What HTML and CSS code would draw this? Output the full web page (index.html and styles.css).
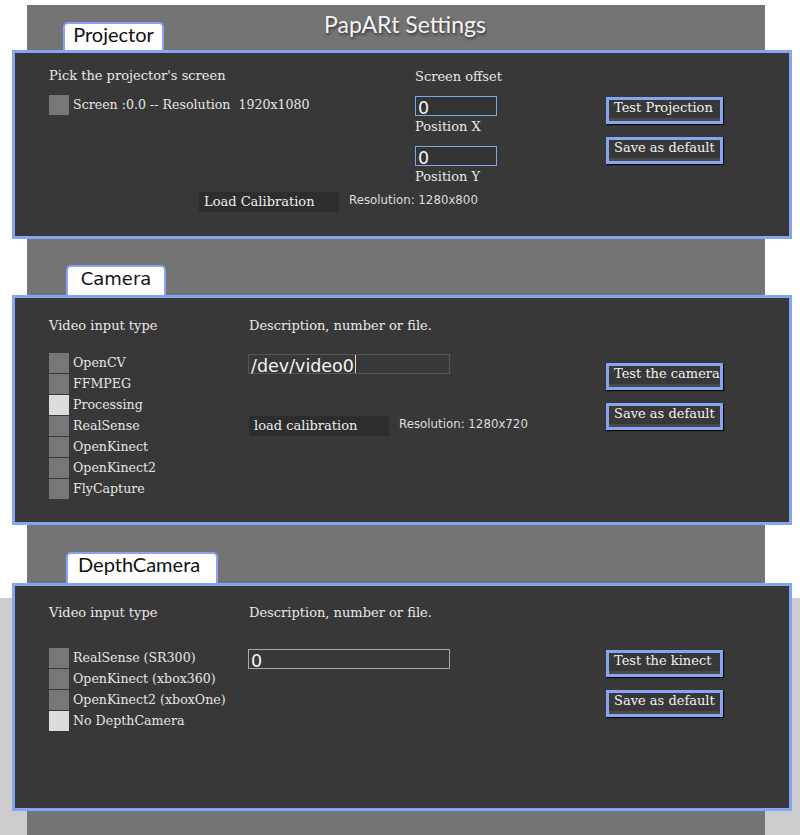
FILE: index.html
```html
<!DOCTYPE html>
<html>
<head>
<meta charset="utf-8">
<title>PapARt Settings</title>
<link rel="stylesheet" href="styles.css">
</head>
<body>
<div class="canvas">
  <h1 class="title">PapARt Settings</h1>

  <section class="group">
    <div class="tab tab-proj">Projector</div>
    <div class="panel panel-proj">
      <div class="cols">
        <div class="col c1-proj">
          <div class="label">Pick the projector's screen</div>
          <div class="opts opts-proj">
            <div class="opt"><span class="box"></span><span class="opt-text">Screen :0.0 -- Resolution&nbsp; 1920x1080</span></div>
          </div>
        </div>
        <div class="col c2-proj">
          <div class="label offset">Screen offset</div>
          <div class="field field-blue field-first">0</div>
          <div class="label sub">Position X</div>
          <div class="field field-blue field-second">0</div>
          <div class="label sub">Position Y</div>
        </div>
        <div class="col c3">
          <div class="btn btn-first-proj">Test Projection</div>
          <div class="btn btn-second">Save as default</div>
        </div>
      </div>
      <div class="loadrow loadrow-proj">
        <div class="loadbtn">Load Calibration</div>
        <div class="res">Resolution: 1280x800</div>
      </div>
    </div>
  </section>

  <section class="group group-next">
    <div class="tab tab-cam">Camera</div>
    <div class="panel panel-cam">
      <div class="cols">
        <div class="col c1">
          <div class="label">Video input type</div>
          <div class="opts opts-cam">
            <div class="opt"><span class="box"></span><span class="opt-text">OpenCV</span></div>
            <div class="opt"><span class="box"></span><span class="opt-text">FFMPEG</span></div>
            <div class="opt"><span class="box on"></span><span class="opt-text">Processing</span></div>
            <div class="opt"><span class="box"></span><span class="opt-text">RealSense</span></div>
            <div class="opt"><span class="box"></span><span class="opt-text">OpenKinect</span></div>
            <div class="opt"><span class="box"></span><span class="opt-text">OpenKinect2</span></div>
            <div class="opt"><span class="box"></span><span class="opt-text">FlyCapture</span></div>
          </div>
        </div>
        <div class="col c2">
          <div class="label desc">Description, number or file.</div>
          <div class="field field-wide field-dark field-cam"><span class="cursor">/dev/video0</span></div>
          <div class="loadrow loadrow-cam">
            <div class="loadbtn">load calibration</div>
            <div class="res">Resolution: 1280x720</div>
          </div>
        </div>
        <div class="col c3">
          <div class="btn btn-first">Test the camera</div>
          <div class="btn btn-second">Save as default</div>
        </div>
      </div>
    </div>
  </section>

  <section class="group group-next2">
    <div class="tab tab-depth">DepthCamera</div>
    <div class="panel panel-depth">
      <div class="cols">
        <div class="col c1">
          <div class="label">Video input type</div>
          <div class="opts opts-depth">
            <div class="opt"><span class="box"></span><span class="opt-text">RealSense (SR300)</span></div>
            <div class="opt"><span class="box"></span><span class="opt-text">OpenKinect (xbox360)</span></div>
            <div class="opt"><span class="box"></span><span class="opt-text">OpenKinect2 (xboxOne)</span></div>
            <div class="opt"><span class="box on"></span><span class="opt-text">No DepthCamera</span></div>
          </div>
        </div>
        <div class="col c2">
          <div class="label desc">Description, number or file.</div>
          <div class="field field-wide field-light field-depth">0</div>
        </div>
        <div class="col c3">
          <div class="btn btn-first">Test the kinect</div>
          <div class="btn btn-second">Save as default</div>
        </div>
      </div>
    </div>
  </section>
</div>
</body>
</html>
```

FILE: styles.css
```css
html, body {
  margin: 0;
  padding: 0;
}

body {
  height: 835px;
  overflow: hidden;
  background: linear-gradient(to bottom, #ffffff 0, #ffffff 598px, #cccccc 598px, #cccccc 100%);
  font-family: "DejaVu Serif", serif;
  font-size: 13px;
}

.canvas {
  position: relative;
  box-sizing: border-box;
  margin: 5px 0 0 27px;
  width: 738px;
  height: 830px;
  padding-top: 17px;
  background: #747474;
}

.title {
  position: absolute;
  top: 5px;
  left: 0;
  right: 0;
  margin: 0;
  padding-left: 18px;
  text-align: center;
  font-family: Lato, "Open Sans", sans-serif;
  font-weight: 400;
  font-size: 23px;
  line-height: 28px;
  color: #f4f4f4;
  text-shadow: 1px 2px 3px rgba(0, 0, 0, 0.55);
}

.group {
  margin-left: -15px;
  margin-right: -27px;
}

.group-next {
  margin-top: 26px;
}

.group-next2 {
  margin-top: 27px;
}

.tab {
  box-sizing: border-box;
  border: 2px solid #86a5f0;
  border-bottom: 0;
  border-radius: 5px 5px 0 0;
  background: #ffffff;
  color: #111111;
  text-align: center;
  font-family: Lato, "Open Sans", sans-serif;
  font-size: 20px;
  line-height: 20px;
}

.tab-proj {
  margin-left: 51px;
  width: 101px;
  height: 28px;
}

.tab-cam {
  margin-left: 54px;
  width: 100px;
  height: 30px;
  padding-top: 1px;
  font-family: "DejaVu Sans", sans-serif;
  font-size: 18px;
  line-height: 22px;
}

.tab-depth {
  margin-left: 54px;
  width: 152px;
  height: 31px;
  padding-left: 10px;
  text-align: left;
}

.panel {
  box-sizing: border-box;
  border: 3px solid #86a5f0;
  background: #383838;
  color: #e8e8e8;
  padding-left: 34px;
}

.panel-proj {
  height: 189px;
  padding-top: 15px;
}

.panel-cam {
  height: 230px;
  padding-top: 20px;
}

.panel-depth {
  height: 228px;
  padding-top: 19px;
}

.cols {
  display: flex;
  align-items: flex-start;
}

.col {
  display: flex;
  flex-direction: column;
  align-items: flex-start;
}

.c1-proj { width: 366px; }
.c2-proj { width: 191px; }
.c1 { width: 199px; }
.c2 { width: 358px; }

.label {
  line-height: 16px;
  white-space: nowrap;
}

.offset {
  margin-top: 1px;
  margin-bottom: -1px;
}

.desc {
  padding-left: 1px;
}

.sub {
  margin-top: 3px;
}

.opts {
  display: flex;
  flex-direction: column;
  gap: 1px;
}

.opts-proj { margin-top: 11px; }
.opts-cam { margin-top: 19px; }
.opts-depth { margin-top: 27px; }

.opt {
  display: flex;
  align-items: center;
  height: 20px;
}

.box {
  width: 20px;
  height: 20px;
  background: #777777;
  flex: none;
}

.box.on {
  background: #dcdcdc;
}

.opt-text {
  margin-left: 4px;
  font-size: 12.6px;
  line-height: 20px;
  white-space: nowrap;
  color: #e6e6e6;
}

.field {
  box-sizing: border-box;
  height: 20px;
  padding-left: 2px;
  font-family: "DejaVu Sans", sans-serif;
  font-size: 17.5px;
  line-height: 22px;
  color: #f4f4f4;
  background: #333333;
  white-space: nowrap;
}

.field-blue {
  width: 82px;
  border: 1px solid #86a5f0;
}

.field-first { margin-top: 12px; }
.field-second { margin-top: 11px; }

.field-wide {
  width: 202px;
}

.field-dark {
  border: 1px solid #555555;
  background: #383838;
}

.field-light {
  border: 1px solid #a8a8a8;
  background: #383838;
}

.field-cam { margin-top: 20px; }
.field-depth { margin-top: 28px; }

.cursor {
  display: inline-block;
  height: 18px;
  line-height: 22px;
  vertical-align: top;
  border-right: 1px solid #dddddd;
  padding-right: 1px;
}

.btn {
  box-sizing: border-box;
  width: 117px;
  height: 27px;
  padding-left: 5px;
  border: 3px solid #86a5f0;
  background: linear-gradient(to bottom, #383838 0, #383838 calc(100% - 3px), #4a4a4a calc(100% - 3px));
  box-shadow: 1px 1px 1px rgba(0, 0, 0, 0.85);
  color: #f2f2f2;
  line-height: 15px;
  white-space: nowrap;
}

.btn-first-proj { margin-top: 29px; }
.btn-first { margin-top: 45px; }
.btn-second { margin-top: 13px; }

.loadrow {
  display: flex;
  align-items: flex-start;
}

.loadrow-proj {
  margin-top: 7px;
  padding-left: 150px;
}

.loadrow-cam {
  margin-top: 42px;
  padding-left: 1px;
}

.loadbtn {
  box-sizing: border-box;
  width: 140px;
  height: 20px;
  padding-left: 5px;
  background: #2d2d2d;
  color: #eeeeee;
  line-height: 19px;
  white-space: nowrap;
}

.res {
  margin-left: 10px;
  font-family: "DejaVu Sans", sans-serif;
  font-size: 11.8px;
  line-height: 16px;
  color: #dddddd;
  white-space: nowrap;
}
```
